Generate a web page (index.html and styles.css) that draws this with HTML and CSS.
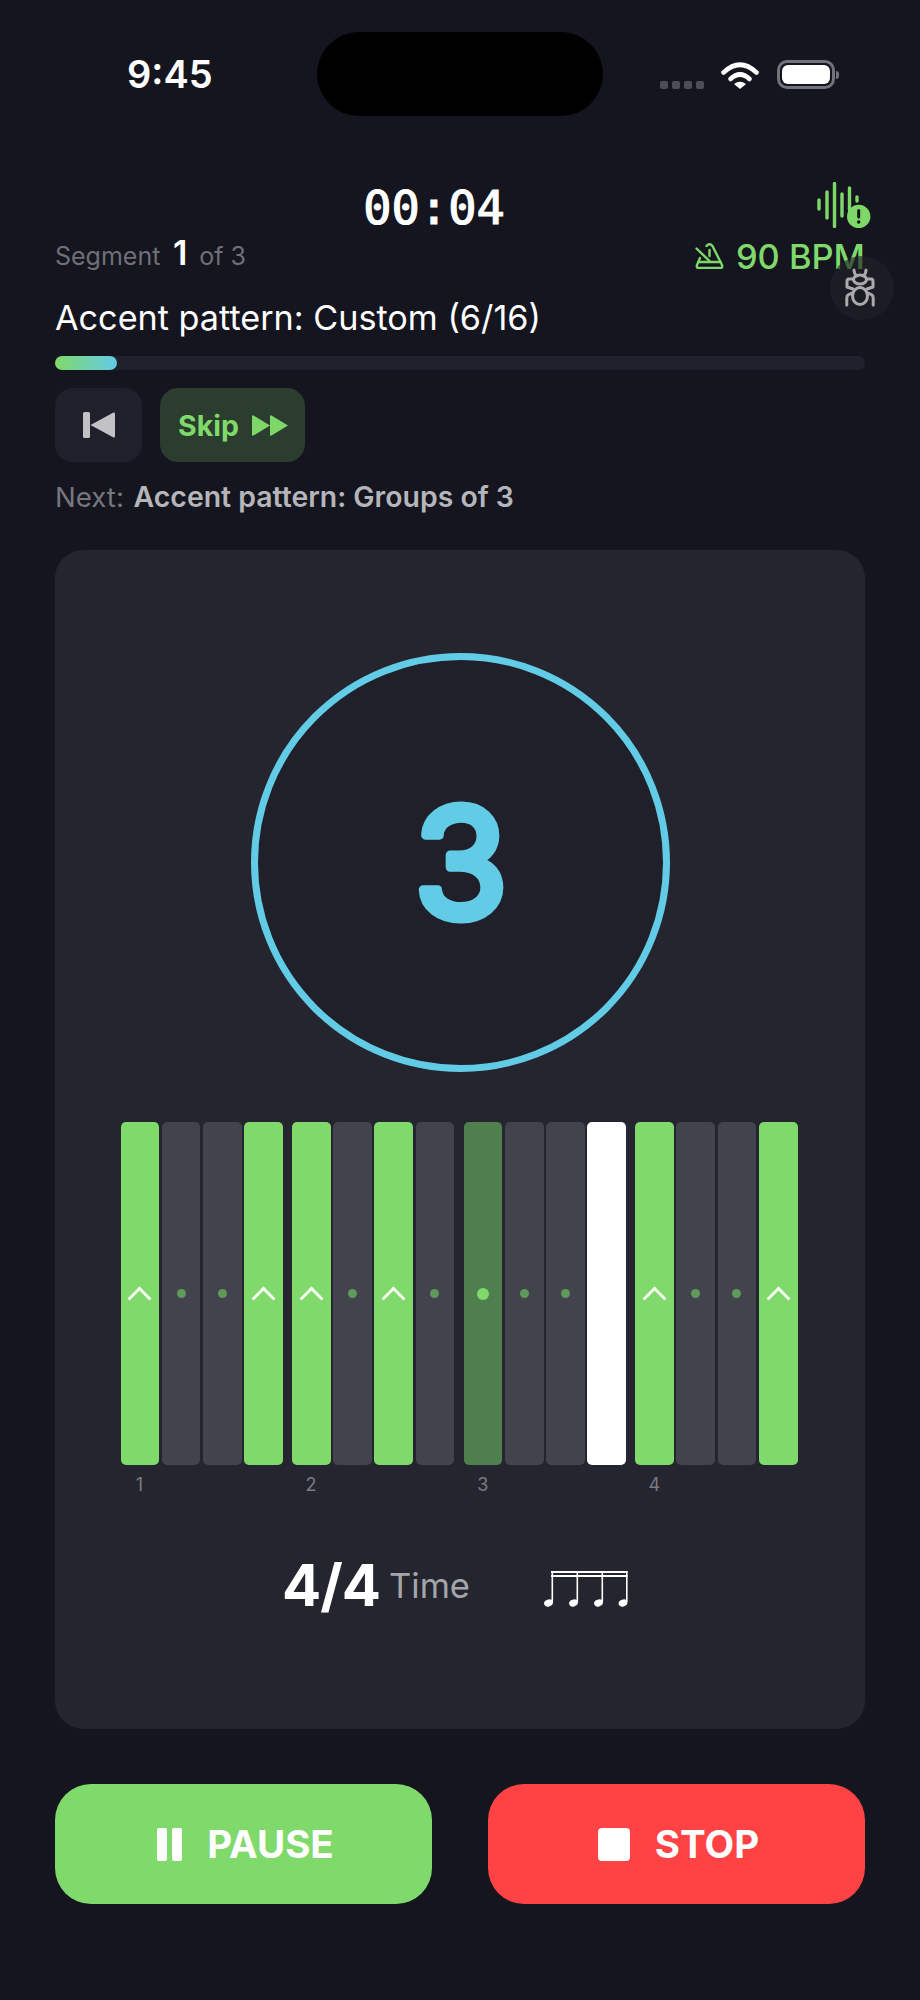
FILE: index.html
```html
<!DOCTYPE html>
<html lang="en">
<head>
    <meta charset="UTF-8">
    <title>Practice Session</title>
    <link rel="stylesheet" href="styles.css">
</head>
<body>
    <!-- Status bar -->
    <div class="status-bar">
        <div class="clock">9:45</div>
        <div class="island"></div>
        <div class="status-icons">
            <div class="signal"><span></span><span></span><span></span><span></span></div>
            <svg class="wifi" width="38" height="29" viewBox="0 0 38 29">
                <path d="M2.5 12.5 Q19 -3 35.5 12.5" fill="none" stroke="#fff" stroke-width="4.6" stroke-linecap="round"/>
                <path d="M9.5 19 Q19 10 28.500 19" fill="none" stroke="#fff" stroke-width="4.6" stroke-linecap="round"/>
                <path d="M13 24 Q19 19.500 25 24 L19 29 Z" fill="#fff"/>
            </svg>
            <div class="battery"><div class="battery-fill"></div></div>
            <div class="battery-nub"></div>
        </div>
    </div>

    <div class="session">
        <!-- Header -->
        <div class="timer-row">
            <div class="timer">00:04</div>
            <svg class="wave-icon" width="54" height="46" viewBox="0 0 54 46">
                <g stroke="#7ed868" stroke-width="3.4" stroke-linecap="round">
                    <path d="M2 18V27"/>
                    <path d="M10 10V36"/>
                    <path d="M17.500 1.500V44.500"/>
                    <path d="M25 12V34"/>
                    <path d="M32.500 6V28"/>
                    <path d="M40 15V19"/>
                </g>
                <circle cx="41.700" cy="34.500" r="11.700" fill="#7ed868"/>
                <rect x="40.200" y="27" width="3" height="9.500" rx="1.500" fill="#14151f"/>
                <circle cx="41.700" cy="40" r="1.800" fill="#14151f"/>
            </svg>
        </div>

        <div class="meta-row">
            <div class="segment">Segment <b>1</b> of 3</div>
            <div class="tempo">
                <svg width="29" height="26" viewBox="0 0 29 26" fill="none" stroke="#7ed868" stroke-width="2.400" stroke-linecap="round" stroke-linejoin="round">
                    <path d="M11.500 3 Q14.500 -0.500 17.500 3 L27 22 Q28 25 25 25 H4 Q1 25 2 22 L5 15"/>
                    <path d="M3.500 19H25.500"/>
                    <path d="M1.500 5.500L15 18.500"/>
                    <path d="M14.500 7V13"/>
                </svg>
                <span>90 BPM</span>
            </div>
        </div>

        <div class="segment-title">Accent pattern: Custom (6/16)</div>

        <div class="progress"><div class="progress-fill"></div></div>

        <div class="skip-row">
            <div class="btn-prev">
                <svg width="32" height="26" viewBox="0 0 32 26" fill="#c2c2c6">
                    <rect x="0" y="0" width="7" height="26" rx="1.500"/>
                    <path d="M30.500 0.500 Q32 0 32 2 V24 Q32 26 30.500 25.500 L7.500 13 Z"/>
                </svg>
            </div>
            <div class="btn-skip">
                <span>Skip</span>
                <svg width="36" height="21" viewBox="0 0 36 21" fill="#7ed868">
                    <path d="M0 1 Q0 0 1.500 0.500 L18 10.500 L1.500 20.500 Q0 21 0 20 Z"/>
                    <path d="M18 1 Q18 0 19.500 0.500 L36 10.500 L19.500 20.500 Q18 21 18 20 Z"/>
                </svg>
            </div>
        </div>

        <div class="next-up">Next: <b>Accent pattern: Groups of 3</b></div>

        <!-- Main card -->
        <div class="beat-card">
            <div class="count-ring">
                <svg class="count-num" width="150" height="200" viewBox="0 0 150 200">
                    <text x="75" y="155">3</text>
                </svg>
            </div>

            <div class="beat-strip">
                <div class="beat-group">
                    <div class="bars">
                        <div class="bar accent"><i class="caret"></i></div>
                        <div class="bar"><i class="dot"></i></div>
                        <div class="bar"><i class="dot"></i></div>
                        <div class="bar accent"><i class="caret"></i></div>
                    </div>
                    <div class="beat-label">1</div>
                </div>
                <div class="beat-group">
                    <div class="bars">
                        <div class="bar accent"><i class="caret"></i></div>
                        <div class="bar"><i class="dot"></i></div>
                        <div class="bar accent"><i class="caret"></i></div>
                        <div class="bar"><i class="dot"></i></div>
                    </div>
                    <div class="beat-label">2</div>
                </div>
                <div class="beat-group">
                    <div class="bars">
                        <div class="bar played"><i class="dot"></i></div>
                        <div class="bar"><i class="dot"></i></div>
                        <div class="bar"><i class="dot"></i></div>
                        <div class="bar current"></div>
                    </div>
                    <div class="beat-label">3</div>
                </div>
                <div class="beat-group">
                    <div class="bars">
                        <div class="bar accent"><i class="caret"></i></div>
                        <div class="bar"><i class="dot"></i></div>
                        <div class="bar"><i class="dot"></i></div>
                        <div class="bar accent"><i class="caret"></i></div>
                    </div>
                    <div class="beat-label">4</div>
                </div>
            </div>

            <div class="meter">
                <span class="meter-num">4/4</span>
                <span class="meter-word">Time</span>
                <svg class="notes" width="84" height="38" viewBox="0 0 84 38" fill="#fff">
                    <rect x="7" y="1" width="76.500" height="2"/>
                    <rect x="7" y="5" width="76.500" height="2"/>
                    <rect x="7.500" y="1" width="1.600" height="31"/>
                    <rect x="32.500" y="1" width="1.600" height="31"/>
                    <rect x="57.500" y="1" width="1.600" height="31"/>
                    <rect x="82" y="1" width="1.600" height="31"/>
                    <ellipse cx="4.500" cy="33" rx="4.500" ry="3.400" transform="rotate(-20 4.500 33)"/>
                    <ellipse cx="29.500" cy="33" rx="4.500" ry="3.400" transform="rotate(-20 29.500 33)"/>
                    <ellipse cx="54.500" cy="33" rx="4.500" ry="3.400" transform="rotate(-20 54.500 33)"/>
                    <ellipse cx="79" cy="33" rx="4.500" ry="3.400" transform="rotate(-20 79 33)"/>
                </svg>
            </div>
        </div>

        <!-- Actions -->
        <div class="actions">
            <div class="action action-pause">
                <div class="pause-icon"><span></span><span></span></div>
                PAUSE
            </div>
            <div class="action action-stop">
                <div class="stop-icon"></div>
                STOP
            </div>
        </div>
    </div>

    <div class="debug-btn">
        <svg width="30" height="40" viewBox="0 0 30 40" fill="none" stroke="#aaaaae" stroke-width="3" stroke-linecap="round" stroke-linejoin="round">
            <path d="M9 2 Q9 6 12 8"/>
            <path d="M21 2 Q21 6 18 8"/>
            <ellipse cx="15" cy="11.500" rx="6.500" ry="4.500"/>
            <ellipse cx="15" cy="28" rx="7.500" ry="8.500"/>
            <path d="M8.500 11 H4 Q2 11 2 13.500 V19 L8 21"/>
            <path d="M21.500 11 H26 Q28 11 28 13.500 V19 L22 21"/>
            <path d="M7 25 L3 27 Q1.800 28 1.800 30 V37"/>
            <path d="M23 25 L27 27 Q28.200 28 28.200 30 V37"/>
        </svg>
    </div>
</body>
</html>
```

FILE: styles.css
```css
/* Base */
:root {
    --bg: #14151f;
    --surface: #24252f;
    --green: #80d96b;
    --blue: #62cbe6;
    --red: #ff4244;
}

* {
    margin: 0;
    padding: 0;
    box-sizing: border-box;
}

body {
    position: relative;
    width: 920px;
    height: 2000px;
    overflow: hidden;
    background: var(--bg);
    color: #fff;
    font-family: 'Inter', sans-serif;
}

/* Status bar */
.status-bar {
    display: grid;
    grid-template-columns: 317px 286px 1fr;
    height: 116px;
    padding-top: 32px;
}

.clock {
    padding-left: 127px;
    font-size: 38px;
    font-weight: 600;
    line-height: 84px;
}

.island {
    height: 84px;
    border-radius: 42px;
    background: #000;
}

.status-icons {
    display: flex;
    align-items: flex-end;
    height: 57px;
    padding-left: 57px;
}

.signal {
    display: flex;
    gap: 4px;
    margin-right: 17px;
}

.signal span {
    width: 8px;
    height: 8px;
    border-radius: 2px;
    background: #4c4d57;
}

.battery {
    width: 58px;
    height: 29px;
    margin-left: 18px;
    padding: 2px;
    border: 3px solid #72727b;
    border-radius: 10px;
}

.battery-fill {
    height: 100%;
    border-radius: 6px;
    background: #fff;
}

.battery-nub {
    width: 3px;
    height: 8px;
    margin: 0 0 10px 1px;
    border-radius: 0 3px 3px 0;
    background: #72727b;
}

/* Session */
.session {
    padding: 66px 55px 0;
}

.timer-row {
    display: flex;
    align-items: center;
    height: 46px;
    margin-right: -6px;
}

.timer {
    flex: 1;
    padding: 5px 4px 0 0;
    text-align: center;
    font-family: 'DejaVu Sans Mono', monospace;
    font-size: 47px;
    font-weight: 400;
    line-height: 46px;
    -webkit-text-stroke: 1.2px #fff;
}

.meta-row {
    display: flex;
    justify-content: space-between;
    align-items: center;
    height: 36px;
    margin-top: 10px;
}

.segment {
    display: flex;
    align-items: baseline;
    margin-bottom: 8px;
    font-size: 25px;
    color: #6e6f77;
    white-space: pre;
}

.segment b {
    margin: 0 5px 0 5.5px;
    font-size: 34px;
    font-weight: 600;
    color: #fff;
}

.tempo {
    display: flex;
    align-items: center;
    gap: 12px;
    font-size: 34.4px;
    font-weight: 500;
    color: var(--green);
}

.segment-title {
    margin-top: 24px;
    font-size: 34.2px;
    line-height: 40px;
}

.progress {
    height: 14px;
    margin-top: 18px;
    border-radius: 7px;
    background: #20212c;
}

.progress-fill {
    width: 62px;
    height: 100%;
    border-radius: 7px;
    background: linear-gradient(to right, var(--green), var(--blue));
}

.skip-row {
    display: flex;
    gap: 18px;
    margin-top: 18px;
}

.btn-prev {
    display: flex;
    justify-content: center;
    align-items: center;
    width: 87px;
    height: 74px;
    border-radius: 18px;
    background: #1f202b;
}

.btn-skip {
    display: flex;
    align-items: center;
    gap: 13px;
    height: 74px;
    padding: 0 17px 0 18px;
    border-radius: 18px;
    background: #2a3d2e;
    font-size: 28.5px;
    font-weight: 700;
    color: var(--green);
}

.next-up {
    margin-top: 18px;
    font-size: 27.6px;
    line-height: 33px;
    color: #77777d;
}

.next-up b {
    margin-left: 2px;
    font-size: 28.4px;
    font-weight: 600;
    color: #b5b5ba;
}

/* Beat card */
.beat-card {
    display: flex;
    flex-direction: column;
    align-items: center;
    height: 1179px;
    margin-top: 36px;
    padding: 103px 66px 0;
    border-radius: 28px;
    background: var(--surface);
}

.count-ring {
    display: flex;
    justify-content: center;
    align-items: center;
    flex: none;
    width: 419px;
    height: 419px;
    margin-left: 1px;
    border: 7px solid var(--blue);
    border-radius: 50%;
    background: #1f202a;
}

.count-num text {
    font-family: 'Inter', sans-serif;
    font-size: 152px;
    font-weight: 400;
    text-anchor: middle;
    fill: var(--blue);
    stroke: var(--blue);
    stroke-width: 9px;
    stroke-linejoin: round;
}

.beat-strip {
    display: flex;
    align-self: flex-start;
    gap: 9.4px;
    width: 677px;
    margin: 50px 0 0 -0.5px;
}

.beat-group {
    flex: 1;
}

.bars {
    display: flex;
    gap: 2.4px;
    height: 343px;
}

.bar {
    display: flex;
    justify-content: center;
    align-items: center;
    flex: 1;
    border-radius: 5px;
    background: #42434d;
}

.bar.accent {
    background: var(--green);
}

.bar.played {
    background: #507f4e;
}

.bar.current {
    background: #fff;
}

.dot {
    width: 9px;
    height: 9px;
    border-radius: 50%;
    background: #5f9a5a;
}

.played .dot {
    width: 12px;
    height: 12px;
    background: var(--green);
}

.caret {
    width: 17px;
    height: 17px;
    margin-top: 10px;
    border-top: 3px solid #f3fcef;
    border-left: 3px solid #f3fcef;
    transform: rotate(45deg);
}

.beat-label {
    width: 38px;
    margin-top: 8px;
    text-align: center;
    font-size: 18px;
    line-height: 24px;
    color: #7b7b84;
}

.meter {
    display: flex;
    align-items: center;
    margin-top: 53px;
    padding-right: 10px;
}

.meter-num {
    font-size: 58px;
    font-weight: 700;
    letter-spacing: -1px;
    line-height: 70px;
}

.meter-word {
    margin-left: 9px;
    font-size: 34.500px;
    color: #a5a5aa;
}

.notes {
    margin: 8px 0 0 74px;
}

/* Actions */
.actions {
    display: flex;
    gap: 56px;
    margin-top: 55px;
}

.action {
    display: flex;
    justify-content: center;
    align-items: center;
    gap: 25px;
    flex: 1;
    height: 120px;
    padding-left: 4px;
    border-radius: 36px;
    font-size: 38.5px;
    font-weight: 700;
}

.action-pause {
    background: var(--green);
}

.action-stop {
    background: var(--red);
}

.pause-icon {
    display: flex;
    gap: 5px;
}

.pause-icon span {
    width: 10px;
    height: 33px;
    border-radius: 2px;
    background: #fff;
}

.stop-icon {
    width: 32px;
    height: 33px;
    border-radius: 4px;
    background: #fff;
}

/* Floating debug button */
.debug-btn {
    position: absolute;
    top: 256px;
    left: 830px;
    display: flex;
    justify-content: center;
    align-items: center;
    width: 64px;
    height: 64px;
    padding-right: 4px;
    border-radius: 50%;
    background: rgba(32, 33, 40, 0.65);
}
```
